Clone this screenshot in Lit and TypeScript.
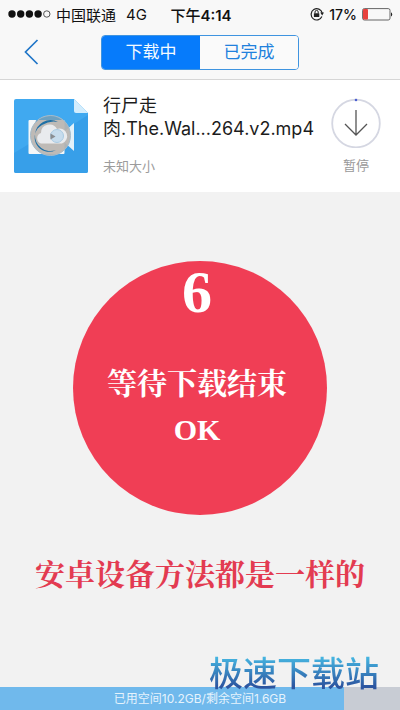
import { LitElement, html, css } from "lit";
import { customElement, property, state } from "lit/decorators.js";
import { classMap } from "lit/directives/class-map.js";

@customElement("status-bar")
class StatusBar extends LitElement {
  static styles = css`
    :host {
      display: grid;
      grid-template-columns: 1fr auto 1fr;
      align-items: center;
      height: 28px;
      padding: 0 6px 0 8px;
      font-size: 15px;
      color: #111;
    }
    .group {
      display: flex;
      align-items: center;
      gap: 5px;
      white-space: nowrap;
    }
    .end {
      justify-content: flex-end;
    }
    .network {
      margin-left: 5px;
    }
    .time {
      font-weight: 600;
    }
    .cjk {
      font-weight: 500;
    }
    .level {
      font-size: 14px;
      font-weight: 500;
    }
    svg {
      display: block;
      flex: none;
    }
  `;

  render() {
    return html`
      <div class="group">
        <svg width="43" height="10" viewBox="0 0 43 10" aria-hidden="true">
          <circle cx="4" cy="5" r="3.7" fill="#111" />
          <circle cx="12.7" cy="5" r="3.7" fill="#111" />
          <circle cx="21.4" cy="5" r="3.7" fill="#111" />
          <circle cx="30.1" cy="5" r="3.7" fill="#111" />
          <circle cx="38.8" cy="5" r="3.2" fill="none" stroke="#555" />
        </svg>
        <span>中国联通</span>
        <span class="network">4G</span>
      </div>
      <div class="time"><span class="cjk">下午</span>4:14</div>
      <div class="group end">
        <svg width="14" height="14" viewBox="0 0 14 14" aria-hidden="true">
          <path d="M11.9 9.6A5.6 5.6 0 1 1 12.2 6" fill="none" stroke="#222" stroke-width="1.2" />
          <path d="M10.2 5.6h3.8l-1.8 2.8z" fill="#222" />
          <rect x="3.9" y="6.2" width="5.4" height="3.8" rx="0.5" fill="#222" />
          <path d="M5 6.4V5a1.6 1.6 0 0 1 3.2 0v1.4" fill="none" stroke="#222" />
        </svg>
        <span class="level">17%</span>
        <svg width="32" height="13" viewBox="0 0 32 13" aria-hidden="true">
          <rect x="0.6" y="0.6" width="27.4" height="11.4" rx="1.8" fill="none" stroke="#555" stroke-width="0.9" />
          <rect x="1" y="1" width="5" height="10.6" rx="1" fill="#e8413d" />
          <path d="M29 4.2a2.6 2.6 0 0 1 0 4.4z" fill="#222" />
        </svg>
      </div>
    `;
  }
}

@customElement("download-item")
class DownloadItem extends LitElement {
  @property() name = "";
  @property() size = "";

  static styles = css`
    :host {
      display: flex;
      align-items: flex-start;
      padding: 14px 18px 16px 14px;
      background: #fff;
    }
    .thumb {
      display: block;
      flex: none;
      margin-top: 4px;
    }
    .info {
      flex: 1;
      min-width: 0;
      margin-left: 15px;
    }
    .name {
      margin: 0;
      font-size: 18px;
      font-weight: 400;
      line-height: 23px;
      color: #1c1c1c;
    }
    .size {
      margin: 16px 0 0;
      font-size: 13px;
      line-height: 20px;
      color: #9c9c9c;
    }
    .pause {
      display: flex;
      flex-direction: column;
      align-items: center;
      gap: 8px;
      margin: 4px 0 0;
      padding: 0;
      border: 0;
      background: none;
      font: inherit;
      font-size: 13px;
      line-height: 18px;
      color: #999;
      cursor: pointer;
    }
    .pause svg {
      display: block;
    }
  `;

  render() {
    return html`
      <svg class="thumb" width="74" height="75" viewBox="0 0 74 75" aria-hidden="true">
        <path d="M2 1H60L74 15V73q0 2-2 2H2q-2 0-2-2V3q0-2 2-2z" fill="#40a9f0" />
        <path d="M0 55L15 46L60 26L74 17V73q0 2-2 2H2q-2 0-2-2z" fill="#379fe9" />
        <path d="M60 1L74 15H62q-2 0-2-2z" fill="#d3edfd" />
        <rect x="14.5" y="22" width="36" height="34" rx="1" fill="#f5f7f8" />
        <path d="M50 34L60 25V53L50 44z" fill="#e4f1f9" />
        <circle cx="36.5" cy="37.5" r="20" fill="#b9b4b0" fill-opacity="0.92" stroke="#a5bccb" />
        <path d="M21.500 24.500A20 20 0 0 1 48 22H22z" fill="#5c9cc4" fill-opacity="0.8" />
        <path d="M44 24A15.500 15.500 0 1 0 42 52A13 13 0 0 1 28 27Q36 22 44 24z" fill="#1f70a5" />
        <path d="M27 45.500a5.500 5.500 0 0 1 0-10.500a8.500 8.500 0 0 1 16-4a7.500 7.500 0 0 1 5 14.500z" fill="#e9ebee" />
        <circle cx="43" cy="38" r="6.500" fill="#c7dced" stroke="#a9cae2" />
        <path d="M36.500 35.500L41.500 38.500L36.500 41.500z" fill="#8a8d92" />
      </svg>
      <div class="info">
        <h2 class="name">${this.name}</h2>
        <p class="size">${this.size}</p>
      </div>
      <button class="pause" type="button">
        <svg width="52" height="50" viewBox="0 0 52 50" aria-hidden="true">
          <circle cx="26" cy="25.5" r="23.8" fill="none" stroke="#d5d7e2" stroke-width="1.8" />
          <circle cx="26" cy="2" r="1.3" fill="#4c5fd0" />
          <path d="M26 12V37M15 26L26 37L37 26" fill="none" stroke="#555" stroke-width="1.3" />
        </svg>
        <span>暂停</span>
      </button>
    `;
  }
}

@customElement("storage-bar")
class StorageBar extends LitElement {
  @property({ type: Number }) used = 0;

  static styles = css`
    :host {
      display: grid;
      background: #c8ccd4;
    }
    .fill,
    .label {
      grid-area: 1 / 1;
    }
    .fill {
      background: #70b9ec;
    }
    .label {
      font-size: 12px;
      line-height: 23px;
      text-align: center;
      color: #e6f3fc;
    }
  `;

  render() {
    return html`
      <div class="fill" style="width:${this.used}%"></div>
      <div class="label">已用空间10.2GB/剩余空间1.6GB</div>
    `;
  }
}

@customElement("app-root")
class AppRoot extends LitElement {
  @state() private tab = 0;

  static styles = css`
    :host {
      display: flex;
      flex-direction: column;
      min-height: 100vh;
      background: #f2f2f2;
      font-family: Inter, "Noto Sans CJK SC", sans-serif;
    }
    .top {
      background: #f8f8f8;
      border-bottom: 1px solid #d6d6d6;
    }
    .nav {
      display: grid;
      grid-template-columns: 1fr auto 1fr;
      align-items: start;
      padding: 7px 16px 9px;
    }
    .back {
      justify-self: start;
      padding: 4px 8px;
      border: 0;
      background: none;
      cursor: pointer;
    }
    .back svg {
      display: block;
    }
    .tabs {
      display: flex;
      width: 198px;
      border: 1px solid #3f94e0;
      border-radius: 4px;
      box-sizing: border-box;
      overflow: hidden;
    }
    .tab {
      flex: 1;
      padding: 0;
      border: 0;
      background: #fafafa;
      color: #2181dd;
      font: inherit;
      font-size: 17px;
      line-height: 33px;
      cursor: pointer;
    }
    .tab.active {
      background: #067bfb;
      color: #f4faff;
    }
    .guide {
      flex: 1;
      display: flex;
      flex-direction: column;
      align-items: center;
      padding-top: 69px;
      font-family: "Liberation Serif", "Noto Serif CJK SC", "Noto Sans CJK SC", serif;
      font-weight: 700;
      text-align: center;
    }
    .step {
      display: flex;
      flex-direction: column;
      align-items: center;
      width: 254px;
      height: 254px;
      box-sizing: border-box;
      padding-right: 6px;
      border-radius: 50%;
      background: #f03e55;
      color: #fff;
    }
    .number {
      font-size: 60px;
      line-height: 62px;
    }
    .message {
      margin: 38px 0 0;
      font-size: 30px;
      line-height: 46px;
      white-space: nowrap;
    }
    .note {
      margin: 37px 0 0;
      font-size: 30px;
      line-height: 46px;
      color: #e33b51;
      white-space: nowrap;
    }
    .bottom {
      position: relative;
    }
    .brand {
      position: absolute;
      right: 21px;
      bottom: 14px;
      font-family: "Noto Sans CJK SC", sans-serif;
      font-size: 34px;
      font-weight: 500;
      line-height: 48px;
      color: transparent;
      background: linear-gradient(#45b4e0 20%, #2c55a0 80%);
      background-clip: text;
      -webkit-background-clip: text;
    }
  `;

  render() {
    return html`
      <header class="top">
        <status-bar></status-bar>
        <nav class="nav">
          <button class="back" type="button" aria-label="返回">
            <svg width="15" height="26" viewBox="0 0 15 26" aria-hidden="true">
              <path d="M13.5 1L1.5 13L13.5 25" fill="none" stroke="#2176c8" stroke-width="1.7" />
            </svg>
          </button>
          <div class="tabs">
            ${["下载中", "已完成"].map(
              (label, i) => html`<button
                type="button"
                class=${classMap({ tab: true, active: this.tab === i })}
                aria-pressed=${this.tab === i}
                @click=${() => (this.tab = i)}
              >${label}</button>`
            )}
          </div>
        </nav>
      </header>
      <download-item name="行尸走肉.The.Wal...264.v2.mp4" size="未知大小"></download-item>
      <main class="guide">
        <div class="step">
          <div class="number">6</div>
          <p class="message">等待下载结束<br />OK</p>
        </div>
        <p class="note">安卓设备方法都是一样的</p>
      </main>
      <footer class="bottom">
        <storage-bar .used=${86}></storage-bar>
        <div class="brand">极速下载站</div>
      </footer>
    `;
  }
}
